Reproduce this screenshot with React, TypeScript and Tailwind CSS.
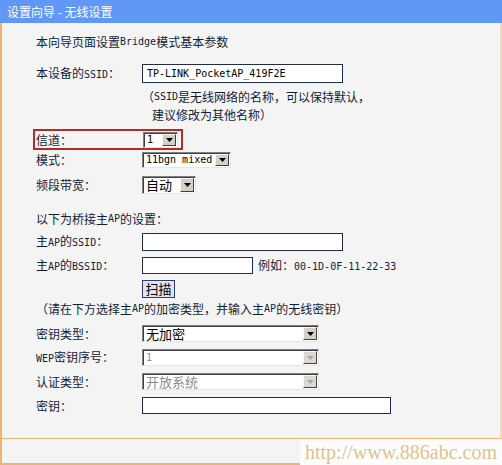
import React from "react";

function M({ children }: { children: React.ReactNode }) {
  return <span className="font-['DejaVu_Sans_Mono',monospace] text-[10px]">{children}</span>;
}

function Row({ label, children, cls }: { label: React.ReactNode; children?: React.ReactNode; cls: string }) {
  return (
    <div className={`flex items-center ${cls}`}>
      <div className="w-[106px] shrink-0 whitespace-nowrap">{label}</div>
      {children}
    </div>
  );
}

function Select({ cls, children, disabled }: { cls: string; children: React.ReactNode; disabled?: boolean }) {
  return (
    <div
      className={`flex items-stretch bg-white border border-t-[#808080] border-l-[#808080] border-r-[#e6e6e6] border-b-[#e6e6e6] shadow-[inset_1px_1px_0_#404040] ${cls}`}
    >
      <div
        className={`flex-1 flex items-center pl-[3px] whitespace-nowrap ${
          disabled ? "text-[#8c8c8c]" : "text-black"
        }`}
      >
        {children}
      </div>
      <div
        className={`w-[14px] my-[1px] mr-[1px] flex items-center justify-center border border-t-[#f8f8f8] border-l-[#f8f8f8] border-r-[#404040] border-b-[#404040] ${
          disabled ? "bg-[#dcd9d2]" : "bg-[#d4d0c8]"
        }`}
      >
        <svg width="7" height="4" viewBox="0 0 7 4">
          <path d="M0 0h7L3.5 4z" fill={disabled ? "#a8a8a8" : "#000"} />
        </svg>
      </div>
    </div>
  );
}

function Input({ cls, children }: { cls: string; children?: React.ReactNode }) {
  return (
    <div className={`bg-white border border-[#1e2d4d] flex items-center pl-[4px] text-black ${cls}`}>{children}</div>
  );
}

export default function App() {
  return (
    <div
      lang="zh-CN"
      className="w-[502px] h-[465px] bg-[#f4f4f4] relative overflow-hidden text-[12px] leading-[14px] text-[#121d38] font-['Noto_Sans_CJK_SC','Noto_Sans',sans-serif]"
    >
      <div className="h-[23px] bg-[#6197f7] flex items-center pl-[7px] text-white text-[12px]">
        设置向导 - 无线设置
      </div>
      <div className="h-[416px] border-l-2 border-r-2 border-b border-l-[#f2b46c] border-r-[#f3dcb8] border-b-[#f2b46c] pl-[34px] flex flex-col">
        <div className="mt-[11px] h-[16px] flex items-center">
          本向导页面设置<M>Bridge</M>模式基本参数
        </div>
        <Row cls="mt-[14px] h-[19px]" label={<>本设备的<M>SSID</M>：</>}>
          <Input cls="w-[201px] h-[19px]">
            <M>TP-LINK_PocketAP_419F2E</M>
          </Input>
        </Row>
        <div className="mt-[6px] h-[16px] flex items-center pl-[106px] whitespace-nowrap">
          （<M>SSID</M>是无线网络的名称，可以保持默认，
        </div>
        <div className="mt-[2px] h-[16px] flex items-center pl-[116px] whitespace-nowrap">建议修改为其他名称）</div>
        <div className="mt-[6px] -ml-[3px] w-[150px] h-[21px] border-2 border-[#b52a2a] flex items-center pl-[1px]">
          <div className="w-[107px] shrink-0">信道：</div>
          <Select cls="w-[35px] h-[16px]">
            <M>1</M>
          </Select>
        </div>
        <Row cls="mt-[2px] h-[16px]" label="模式：">
          <Select cls="w-[89px] h-[16px]">
            <M>11bgn mixed</M>
          </Select>
        </Row>
        <Row cls="mt-[8px] h-[18px]" label="频段带宽：">
          <Select cls="w-[54px] h-[18px]">
            <span className="text-[13px]">自动</span>
          </Select>
        </Row>
        <div className="mt-[17px] h-[16px] flex items-center">
          以下为桥接主<M>AP</M>的设置：
        </div>
        <Row cls="mt-[6px] h-[18px]" label={<>主<M>AP</M>的<M>SSID</M>：</>}>
          <Input cls="w-[201px] h-[18px]" />
        </Row>
        <Row cls="mt-[6px] h-[17px]" label={<>主<M>AP</M>的<M>BSSID</M>：</>}>
          <Input cls="w-[111px] h-[17px]" />
          <span className="ml-[5px] whitespace-nowrap">
            例如：<M>00-1D-0F-11-22-33</M>
          </span>
        </Row>
        <Row cls="mt-[6px] h-[18px]" label="">
          <div className="w-[33px] h-[18px] border border-[#2c3c6c] bg-[#e2e2f6] text-black text-[13px] flex items-center justify-center">
            扫描
          </div>
        </Row>
        <div className="mt-[3px] h-[16px] flex items-center whitespace-nowrap">
          （请在下方选择主<M>AP</M>的加密类型，并输入主<M>AP</M>的无线密钥）
        </div>
        <Row cls="mt-[8px] h-[17px]" label="密钥类型：">
          <Select cls="w-[177px] h-[17px]">
            <span className="text-[13px]">无加密</span>
          </Select>
        </Row>
        <Row cls="mt-[7px] h-[17px]" label={<><M>WEP</M>密钥序号：</>}>
          <Select cls="w-[177px] h-[17px]" disabled>
            <M>1</M>
          </Select>
        </Row>
        <Row cls="mt-[7px] h-[17px]" label="认证类型：">
          <Select cls="w-[177px] h-[17px]" disabled>
            <span className="text-[13px]">开放系统</span>
          </Select>
        </Row>
        <Row cls="mt-[7px] h-[17px]" label="密钥：">
          <Input cls="w-[249px] h-[17px]" />
        </Row>
      </div>
      <div className="h-[26px] border-l-2 border-b-2 border-[#f2b46c]" />
      <div className="absolute right-0 bottom-0 w-[202px] h-[26px] bg-[#fcfcfc] flex items-center pl-[5px] font-['Liberation_Serif',serif] text-[20px] text-[#dcc490]">
        http://www.886abc.com
      </div>
    </div>
  );
}
